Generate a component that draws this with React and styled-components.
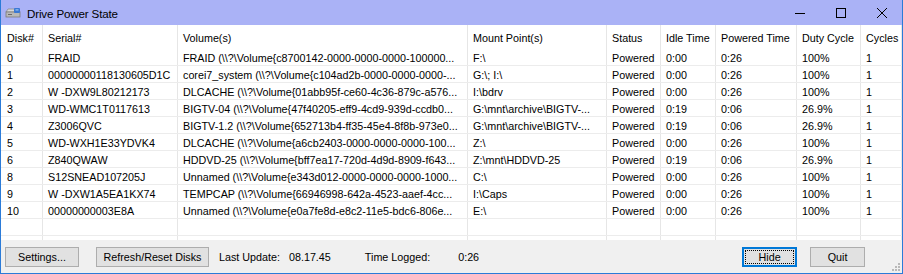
import React from "react"
import styled, { createGlobalStyle } from "styled-components"

const Global = createGlobalStyle`
  html, body {
    margin: 0;
    padding: 0;
    background: #ffffff;
  }
  * {
    box-sizing: border-box;
  }
`

const COLS = "42px 135px 290px 139px 54px 55px 81px 64px 1fr"

const Window = styled.div`
  width: 903px;
  height: 274px;
  display: flex;
  flex-direction: column;
  border: 1px solid #2b7bd8;
  border-top: 0;
  font-family: "Liberation Sans", Arial, sans-serif;
  font-size: 10.75px;
  color: #000;
  overflow: hidden;
`

const TitleBar = styled.div`
  height: 25px;
  flex: none;
  display: flex;
  align-items: center;
  background: #aab2f6;
  padding-left: 4px;
`

const TitleText = styled.span`
  font-size: 11.6px;
  margin-left: 6px;
  margin-top: 2px;
  letter-spacing: -0.15px;
`

const Controls = styled.div`
  margin-left: auto;
  display: flex;
  height: 100%;
`

const CtrlBtn = styled.div`
  width: 41px;
  height: 100%;
  display: flex;
  align-items: center;
  justify-content: center;
`

const Grid = styled.div`
  flex: 1;
  display: flex;
  flex-direction: column;
  background: #fff;
  overflow: hidden;
`

const Row = styled.div`
  display: grid;
  grid-template-columns: ${COLS};
  height: ${(p) => p.$h || 17}px;
  flex: ${(p) => (p.$fill ? 1 : "none")};
  border-bottom: ${(p) => (p.$line ? "1px solid #ececec" : "0")};
`

const Cell = styled.div`
  padding-left: ${(p) => (p.$first ? 6 : 5)}px;
  border-right: 1px solid #e6e6e6;
  white-space: nowrap;
  overflow: hidden;
  display: flex;
  align-items: center;
  padding-top: 1px;
`

const Footer = styled.div`
  height: 33px;
  flex: none;
  background: #f0f0f0;
  display: flex;
  align-items: center;
  padding: 1px 0 0 4px;
  position: relative;
`

const Button = styled.div`
  height: 20px;
  width: ${(p) => p.$w}px;
  margin-left: ${(p) => p.$ml || 0}px;
  background: #e1e1e1;
  border: ${(p) => (p.$focus ? "2px solid #0078d7" : "1px solid #adadad")};
  display: flex;
  align-items: center;
  justify-content: center;
  position: relative;
  flex: none;

  ${(p) =>
    p.$focus &&
    `&::after {
      content: "";
      position: absolute;
      inset: 1px;
      border: 1px dotted #000;
    }`}
`

const Label = styled.span`
  margin-left: ${(p) => p.$ml}px;
  flex: none;
`

const Grip = styled.svg`
  position: absolute;
  right: 1px;
  bottom: 1px;
`

const headers = ["Disk#", "Serial#", "Volume(s)", "Mount Point(s)", "Status", "Idle Time", "Powered Time", "Duty Cycle", "Cycles"]

const disks = [
  ["0", "FRAID", "FRAID (\\\\?\\Volume{c8700142-0000-0000-0000-100000...", "F:\\", "0:00", "0:26", "100%"],
  ["1", "00000000118130605D1C", "corei7_system (\\\\?\\Volume{c104ad2b-0000-0000-0000-...", "G:\\; I:\\", "0:00", "0:26", "100%"],
  ["2", "W -DXW9L80212173", "DLCACHE (\\\\?\\Volume{01abb95f-ce60-4c36-879c-a576...", "I:\\bdrv", "0:00", "0:26", "100%"],
  ["3", "WD-WMC1T0117613", "BIGTV-04 (\\\\?\\Volume{47f40205-eff9-4cd9-939d-ccdb0...", "G:\\mnt\\archive\\BIGTV-...", "0:19", "0:06", "26.9%"],
  ["4", "Z3006QVC", "BIGTV-1.2 (\\\\?\\Volume{652713b4-ff35-45e4-8f8b-973e0...", "G:\\mnt\\archive\\BIGTV-...", "0:19", "0:06", "26.9%"],
  ["5", "WD-WXH1E33YDVK4", "DLCACHE (\\\\?\\Volume{a6cb2403-0000-0000-0000-100...", "Z:\\", "0:00", "0:26", "100%"],
  ["6", "Z840QWAW", "HDDVD-25 (\\\\?\\Volume{bff7ea17-720d-4d9d-8909-f643...", "Z:\\mnt\\HDDVD-25", "0:19", "0:06", "26.9%"],
  ["8", "S12SNEAD107205J", "Unnamed (\\\\?\\Volume{e343d012-0000-0000-0000-1000...", "C:\\", "0:00", "0:26", "100%"],
  ["9", "W -DXW1A5EA1KX74", "TEMPCAP (\\\\?\\Volume{66946998-642a-4523-aaef-4cc...", "I:\\Caps", "0:00", "0:26", "100%"],
  ["10", "00000000003E8A", "Unnamed (\\\\?\\Volume{e0a7fe8d-e8c2-11e5-bdc6-806e...", "E:\\", "0:00", "0:26", "100%"],
]

function DriveIcon() {
  return (
    <svg width="16" height="12" viewBox="0 0 16 12">
      <path d="M1 5 L3 2 H13 L15 5 Z" fill="#d8d8d8" stroke="#8a8a8a" strokeWidth="0.8" />
      <rect x="1" y="5" width="14" height="5" fill="#b9b9b9" stroke="#7a7a7a" strokeWidth="0.8" />
      <rect x="9" y="1" width="6" height="5" rx="1" fill="#3a78d4" />
      <rect x="10.5" y="2.3" width="3" height="1.2" fill="#9cc2f2" />
      <rect x="3" y="7" width="4" height="1" fill="#6a6a6a" />
    </svg>
  )
}

function emptyCells() {
  return headers.map((h, i) => <Cell key={i} $first={i === 0} />)
}

export default function App() {
  return (
    <>
      <Global />
      <Window>
        <TitleBar>
          <DriveIcon />
          <TitleText>Drive Power State</TitleText>
          <Controls>
            <CtrlBtn>
              <svg width="10" height="10" viewBox="0 0 10 10">
                <path d="M0 5.5 H10" stroke="#000" strokeWidth="1" />
              </svg>
            </CtrlBtn>
            <CtrlBtn>
              <svg width="10" height="10" viewBox="0 0 10 10">
                <rect x="0.5" y="0.5" width="9" height="9" fill="none" stroke="#000" strokeWidth="1" />
              </svg>
            </CtrlBtn>
            <CtrlBtn>
              <svg width="10" height="10" viewBox="0 0 10 10">
                <path d="M0 0 L10 10 M10 0 L0 10" stroke="#000" strokeWidth="1" />
              </svg>
            </CtrlBtn>
          </Controls>
        </TitleBar>

        <Grid>
          <Row $h={24}>
            {headers.map((h, i) => (
              <Cell key={h} $first={i === 0}>{h}</Cell>
            ))}
          </Row>
          {disks.map((d) => (
            <Row key={d[0]} $line>
              <Cell $first>{d[0]}</Cell>
              <Cell>{d[1]}</Cell>
              <Cell>{d[2]}</Cell>
              <Cell>{d[3]}</Cell>
              <Cell>Powered</Cell>
              <Cell>{d[4]}</Cell>
              <Cell>{d[5]}</Cell>
              <Cell>{d[6]}</Cell>
              <Cell>1</Cell>
            </Row>
          ))}
          <Row $line>{emptyCells()}</Row>
          <Row $fill>{emptyCells()}</Row>
        </Grid>

        <Footer>
          <Button $w={74}>Settings...</Button>
          <Button $w={113} $ml={17}>Refresh/Reset Disks</Button>
          <Label $ml={10}>Last Update:</Label>
          <Label $ml={9}>08.17.45</Label>
          <Label $ml={34}>Time Logged:</Label>
          <Label $ml={28}>0:26</Label>
          <Button $w={55} $ml={263} $focus>Hide</Button>
          <Button $w={55} $ml={13}>Quit</Button>
          <Grip width="10" height="10" viewBox="0 0 10 10">
            {[[8, 2], [8, 5], [8, 8], [5, 5], [5, 8], [2, 8]].map(([x, y]) => (
              <rect key={x + "-" + y} x={x - 1} y={y - 1} width="2" height="2" fill="#b8b8b8" />
            ))}
          </Grip>
        </Footer>
      </Window>
    </>
  )
}
